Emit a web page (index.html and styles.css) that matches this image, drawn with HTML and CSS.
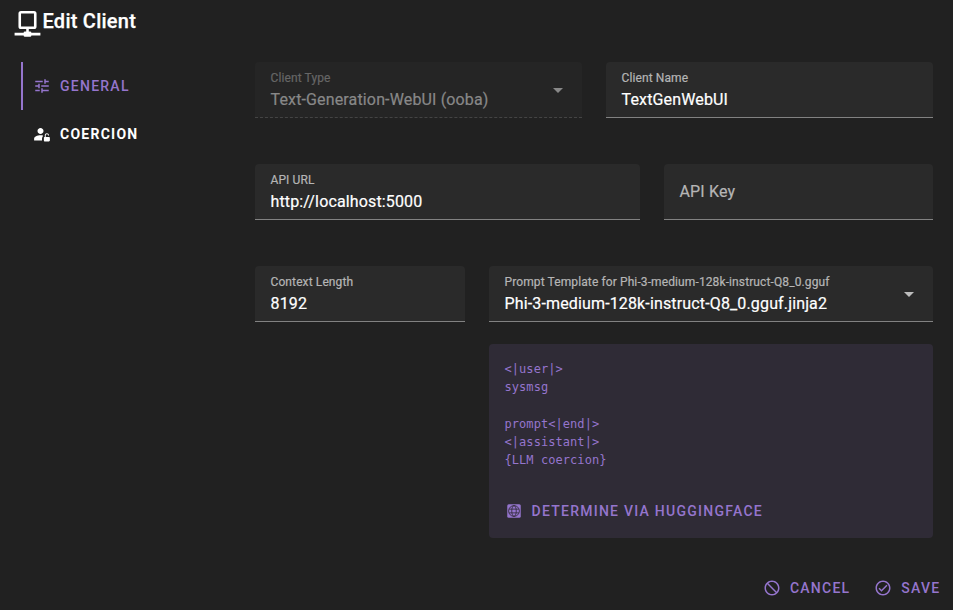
FILE: index.html
```
<!DOCTYPE html>
<html lang="en">
<head>
<meta charset="utf-8">
<title>Edit Client</title>
<link rel="stylesheet" href="styles.css">
</head>
<body>
<div class="dialog">
  <header class="title">
    <svg class="title-icon" viewBox="0 0 24 24"><path d="M15,20A1,1 0 0,0 14,19H13V17H17A2,2 0 0,0 19,15V5A2,2 0 0,0 17,3H7A2,2 0 0,0 5,5V15A2,2 0 0,0 7,17H11V19H10A1,1 0 0,0 9,20H2V22H9A1,1 0 0,0 10,23H14A1,1 0 0,0 15,22H22V20H15M7,15V5H17V15H7Z"/></svg>
    <h1>Edit Client</h1>
  </header>
  <main class="content">
    <nav class="tabs">
      <a class="tab active"><svg class="icon" viewBox="0 0 24 24"><path d="M3,17V19H9V17H3M3,5V7H13V5H3M13,21V19H21V17H13V15H11V21H13M7,9V11H3V13H7V15H9V9H7M21,13V11H11V13H21M15,9H17V7H21V5H17V3H15V9Z"/></svg><span>GENERAL</span></a>
      <a class="tab"><svg class="icon" viewBox="0 0 24 24"><path d="M10 12c2.200 0 4-1.800 4-4s-1.800-4-4-4-4 1.800-4 4 1.800 4 4 4ZM13 15.300c0-.5.200-1 .5-1.400C12.400 13.600 11.200 13.500 10 13.500c-4.400 0-8.500 1.900-8.500 4.500v2.500H12V18c0-1 .4-2 1-2.700ZM21.800 16H17v-2.500c0-.8.700-1.300 1.500-1.300s1.500.5 1.500 1.300v.5h1.300v-.5c0-1.400-1.400-2.500-2.800-2.500s-2.800 1.100-2.800 2.500V16c-.6 0-1.200.6-1.200 1.200v3.500c0 .7.600 1.300 1.200 1.300h5.500c.7 0 1.300-.6 1.300-1.200v-3.500c0-.7-.6-1.300-1.200-1.300Z"/></svg><span>COERCION</span></a>
    </nav>
    <form class="form">
      <div class="row row-client">
        <div class="field disabled"><label>Client Type</label><div class="value">Text-Generation-WebUI (ooba)</div><svg class="caret" viewBox="0 0 24 24"><path d="M7 10l5 5 5-5z"/></svg></div>
        <div class="field"><label>Client Name</label><div class="value">TextGenWebUI</div></div>
      </div>
      <div class="row row-api">
        <div class="field"><label>API URL</label><div class="value">http://localhost:5000</div></div>
        <div class="field empty"><label>API Key</label></div>
      </div>
      <div class="row row-prompt">
        <div class="field"><label>Context Length</label><div class="value">8192</div></div>
        <div class="template">
          <div class="field"><label>Prompt Template for Phi-3-medium-128k-instruct-Q8_0.gguf</label><div class="value">Phi-3-medium-128k-instruct-Q8_0.gguf.jinja2</div><svg class="caret" viewBox="0 0 24 24"><path d="M7 10l5 5 5-5z"/></svg></div>
          <div class="preview">
<pre>&lt;|user|&gt;
sysmsg

prompt&lt;|end|&gt;
&lt;|assistant|&gt;
{LLM coercion}</pre>
            <a class="button"><svg class="icon" viewBox="0 0 24 24"><rect x="3" y="3" width="18" height="18" rx="2"/><g class="globe"><circle cx="12" cy="12" r="7.200"/><ellipse cx="12" cy="12" rx="3" ry="7.200"/><path d="M5.500 9.500H18.500M5.500 14.500H18.500"/></g></svg><span>DETERMINE VIA HUGGINGFACE</span></a>
          </div>
        </div>
      </div>
    </form>
  </main>
  <footer class="actions">
    <a class="button"><svg class="icon" viewBox="0 0 24 24"><path d="M12 2C17.5 2 22 6.5 22 12S17.500 22 12 22 2 17.500 2 12 6.500 2 12 2M12 4C10.100 4 8.400 4.600 7.100 5.700L18.300 16.900C19.300 15.500 20 13.800 20 12C20 7.600 16.400 4 12 4M16.900 18.300L5.700 7.100C4.600 8.400 4 10.100 4 12C4 16.400 7.600 20 12 20C13.900 20 15.600 19.400 16.900 18.300Z"/></svg><span>CANCEL</span></a>
    <a class="button"><svg class="icon" viewBox="0 0 24 24"><path d="M12 2C6.500 2 2 6.500 2 12S6.500 22 12 22 22 17.500 22 12 17.500 2 12 2M12 20C7.590 20 4 16.410 4 12S7.590 4 12 4 20 7.590 20 12 16.410 20 12 20M16.590 7.580L10 14.170L7.410 11.590L6 13L10 17L18 9L16.590 7.580Z"/></svg><span>SAVE</span></a>
  </footer>
</div>
</body>
</html>
```

FILE: styles.css
```
* { box-sizing: border-box; }
body { margin: 0; background: #212121; color: #fff; font-family: Roboto, sans-serif; }
svg { display: block; fill: currentColor; flex: none; }
.dialog { width: 953px; height: 610px; display: flex; flex-direction: column; overflow: hidden; }
.title { display: flex; height: 62px; padding: 7px 0 0 12px; }
.title-icon { width: 31px; height: 31px; }
h1 { margin: -2px 0 0 -.5px; font-size: 20px; line-height: 32px; font-weight: 500; letter-spacing: .25px; -webkit-text-stroke: .25px; }
.content { display: flex; height: 502px; }
.tabs { width: 234px; margin-left: 21px; }
.tab { display: flex; align-items: center; height: 48px; padding-left: 12px; gap: 9px; font-size: 14px; font-weight: 700; letter-spacing: 1.25px; border-left: 0 solid #9575cd; }
.tab.active { color: #9575cd; font-weight: 500; border-left-width: 2px; padding-left: 10px; }
.icon { width: 18px; height: 18px; }
.form { width: 678px; }
.row { display: grid; column-gap: 24px; margin-bottom: 46px; align-items: start; }
.row-client { grid-template-columns: 327px 327px; }
.row-api { grid-template-columns: 385px 269px; }
.row-prompt { grid-template-columns: 210px 444px; }
.field { position: relative; height: 56px; padding: 8px 15.5px 0; background: #2a2a2a; border-radius: 4px 4px 0 0; border-bottom: 1px solid #828282; white-space: nowrap; -webkit-text-stroke: .2px; }
.field label { display: block; font-size: 12px; line-height: 16px; letter-spacing: .11px; color: #b5b5b5; }
.value { font-size: 16px; line-height: 24px; margin-top: 2px; letter-spacing: .144px; }
.field.empty label { font-size: 16px; line-height: 24px; padding-top: 8px; letter-spacing: .144px; }
.caret { position: absolute; right: 12.5px; top: 16px; width: 24px; height: 24px; color: #bdbdbd; }
.disabled { background: #252525; border-bottom: 1px dashed #444; color: #888; }
.disabled label { color: #666; }
.disabled .caret { color: #888; }
.preview { margin-top: 22px; height: 194px; padding: 16px 15.5px 0; background: #2f2b36; border-radius: 4px; color: #9575cd; }
pre { margin: 0; height: 133px; font: 12px/18.2px "DejaVu Sans Mono", monospace; letter-spacing: .06px; }
.button { display: flex; align-items: center; height: 36px; gap: 9px; font-size: 14px; font-weight: 500; letter-spacing: 1.25px; color: #9575cd; }
.globe { fill: none; stroke: #2f2b36; stroke-width: 1.1; }
.actions { display: flex; justify-content: flex-end; gap: 24px; padding: 6px 12.5px 0 0; }
```
